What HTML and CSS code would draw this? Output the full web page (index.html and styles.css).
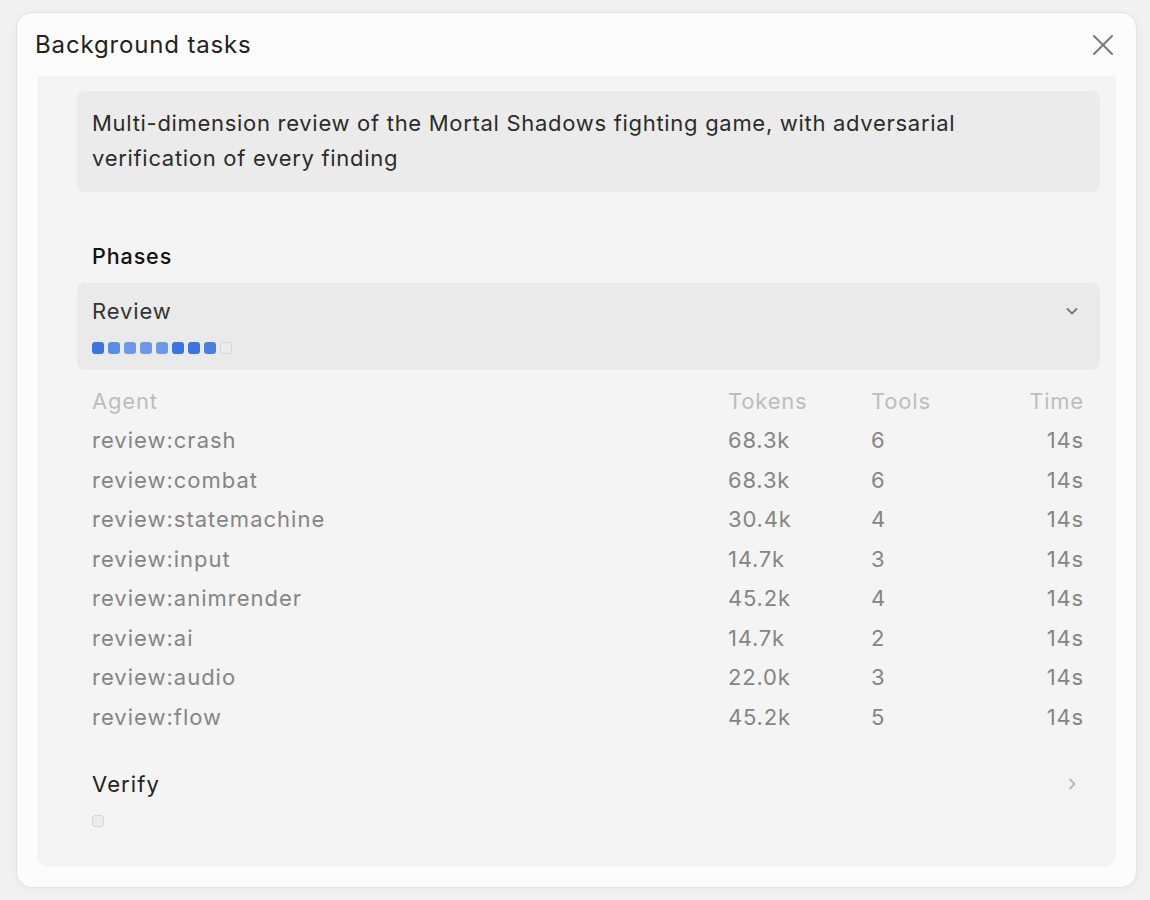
FILE: index.html
```html
<!DOCTYPE html>
<html lang="en">
<head>
<meta charset="utf-8">
<title>Background tasks</title>
<link rel="stylesheet" href="styles.css">
</head>
<body>
<div class="modal">
  <div class="modal-header">
    <h1 class="modal-title">Background tasks</h1>
    <button class="close-btn" aria-label="Close">
      <svg width="22" height="22" viewBox="0 0 22 22"><path d="M2 2 L20 20 M20 2 L2 20" stroke="currentColor" stroke-width="2" stroke-linecap="round" fill="none"/></svg>
    </button>
  </div>
  <div class="panel">
    <div class="task-desc">Multi-dimension review of the Mortal Shadows fighting game, with adversarial verification of every finding</div>

    <div class="section-label">Phases</div>

    <div class="phase phase-open">
      <div class="phase-head">
        <span class="phase-name">Review</span>
        <svg class="chev" width="16" height="16" viewBox="0 0 16 16"><path d="M3.5 6 L8 10.5 L12.5 6" stroke="currentColor" stroke-width="1.8" stroke-linecap="round" stroke-linejoin="round" fill="none"/></svg>
      </div>
      <div class="dots">
        <span class="dot d1"></span><span class="dot d2"></span><span class="dot d3"></span><span class="dot d3"></span><span class="dot d3"></span><span class="dot d1"></span><span class="dot d1"></span><span class="dot d4"></span><span class="dot pending"></span>
      </div>
    </div>

    <table class="agents">
      <thead>
        <tr><th class="c-agent">Agent</th><th class="c-tokens">Tokens</th><th class="c-tools">Tools</th><th class="c-time">Time</th></tr>
      </thead>
      <tbody>
        <tr><td class="c-agent">review:crash</td><td class="c-tokens">68.3k</td><td class="c-tools">6</td><td class="c-time">14s</td></tr>
        <tr><td class="c-agent">review:combat</td><td class="c-tokens">68.3k</td><td class="c-tools">6</td><td class="c-time">14s</td></tr>
        <tr><td class="c-agent">review:statemachine</td><td class="c-tokens">30.4k</td><td class="c-tools">4</td><td class="c-time">14s</td></tr>
        <tr><td class="c-agent">review:input</td><td class="c-tokens">14.7k</td><td class="c-tools">3</td><td class="c-time">14s</td></tr>
        <tr><td class="c-agent">review:animrender</td><td class="c-tokens">45.2k</td><td class="c-tools">4</td><td class="c-time">14s</td></tr>
        <tr><td class="c-agent">review:ai</td><td class="c-tokens">14.7k</td><td class="c-tools">2</td><td class="c-time">14s</td></tr>
        <tr><td class="c-agent">review:audio</td><td class="c-tokens">22.0k</td><td class="c-tools">3</td><td class="c-time">14s</td></tr>
        <tr><td class="c-agent">review:flow</td><td class="c-tokens">45.2k</td><td class="c-tools">5</td><td class="c-time">14s</td></tr>
      </tbody>
    </table>

    <div class="phase">
      <div class="phase-head">
        <span class="phase-name strong">Verify</span>
        <svg class="chev light" width="16" height="16" viewBox="0 0 16 16"><path d="M6 3.5 L10.5 8 L6 12.5" stroke="currentColor" stroke-width="1.8" stroke-linecap="round" stroke-linejoin="round" fill="none"/></svg>
      </div>
      <div class="dots">
        <span class="dot pending"></span>
      </div>
    </div>
  </div>
</div>
</body>
</html>
```

FILE: styles.css
```css
* { box-sizing: border-box; }

html, body {
  margin: 0;
  height: 100%;
}

body {
  background: #f1f1f1;
  font-family: Inter, "Noto Sans", "Liberation Sans", sans-serif;
  padding: 12px 13px 0 16px;
}

.modal {
  height: 876px;
  background: #fcfcfc;
  border: 1px solid #e3e3e3;
  border-radius: 16px;
  box-shadow: 0 2px 10px rgba(0, 0, 0, 0.04);
  display: flex;
  flex-direction: column;
  padding: 0 20px 20px;
}

.modal-header {
  height: 63px;
  display: flex;
  align-items: center;
  justify-content: space-between;
}

.modal-title {
  margin: 0 0 0 -2px;
  font-size: 24px;
  font-weight: 400;
  color: #222;
  letter-spacing: 0.85px;
}

.close-btn {
  border: 0;
  background: none;
  padding: 0;
  color: #7a7a7a;
  width: 22px;
  height: 22px;
  margin-right: 2px;
  display: flex;
}

.panel {
  flex: 1;
  background: #f4f4f4;
  border-radius: 0 0 12px 12px;
  padding: 15px 16px 24px 40px;
  overflow: hidden;
  letter-spacing: 0.9px;
}

.task-desc {
  background: #ebebeb;
  border-radius: 8px;
  padding: 15px 15px 16px;
  font-size: 22px;
  line-height: 35px;
  color: #2b2b2b;
  letter-spacing: 0.7px;
}

.section-label {
  margin: 49px 0 12px 15px;
  font-size: 21.5px;
  line-height: 30px;
  font-weight: 500;
  color: #111;
}

.phase {
  border-radius: 8px;
  padding: 14px 20px 16px 15px;
}

.phase-open {
  background: #eaeaea;
}

.phase-head {
  display: flex;
  align-items: center;
  justify-content: space-between;
  height: 28px;
}

.phase-name {
  font-size: 22px;
  line-height: 28px;
  color: #333;
}

.phase-name.strong {
  color: #222;
  letter-spacing: 1.1px;
}

.chev {
  color: #777;
}

.chev.light {
  color: #b5b5b5;
}

.dots {
  display: flex;
  gap: 4px;
  margin-top: 17px;
  height: 12px;
}

.dot {
  width: 12px;
  height: 12px;
  border-radius: 3px;
}

.d1 { background: #3b74e1; }
.d2 { background: #5a8de6; }
.d3 { background: #6b98e8; }
.d4 { background: #4a80e3; }

.dot.pending {
  background: #ececec;
  border: 1px solid #d6d6d6;
}

.agents {
  width: calc(100% - 31px);
  margin: 11px 0 19px 15px;
  border-collapse: collapse;
  font-size: 22px;
  letter-spacing: 0.8px;
}

.agents th,
.agents td {
  padding: 0;
  height: 39.5px;
  font-weight: 400;
  text-align: left;
  white-space: nowrap;
}

.agents th {
  color: #bdbdbd;
}

.agents td {
  color: #858585;
}

.agents td.c-agent { letter-spacing: 1px; }
.agents .c-tokens { width: 143px; }
.agents .c-tools { width: 100px; }
.agents .c-time { text-align: right; width: 113px; }
```
